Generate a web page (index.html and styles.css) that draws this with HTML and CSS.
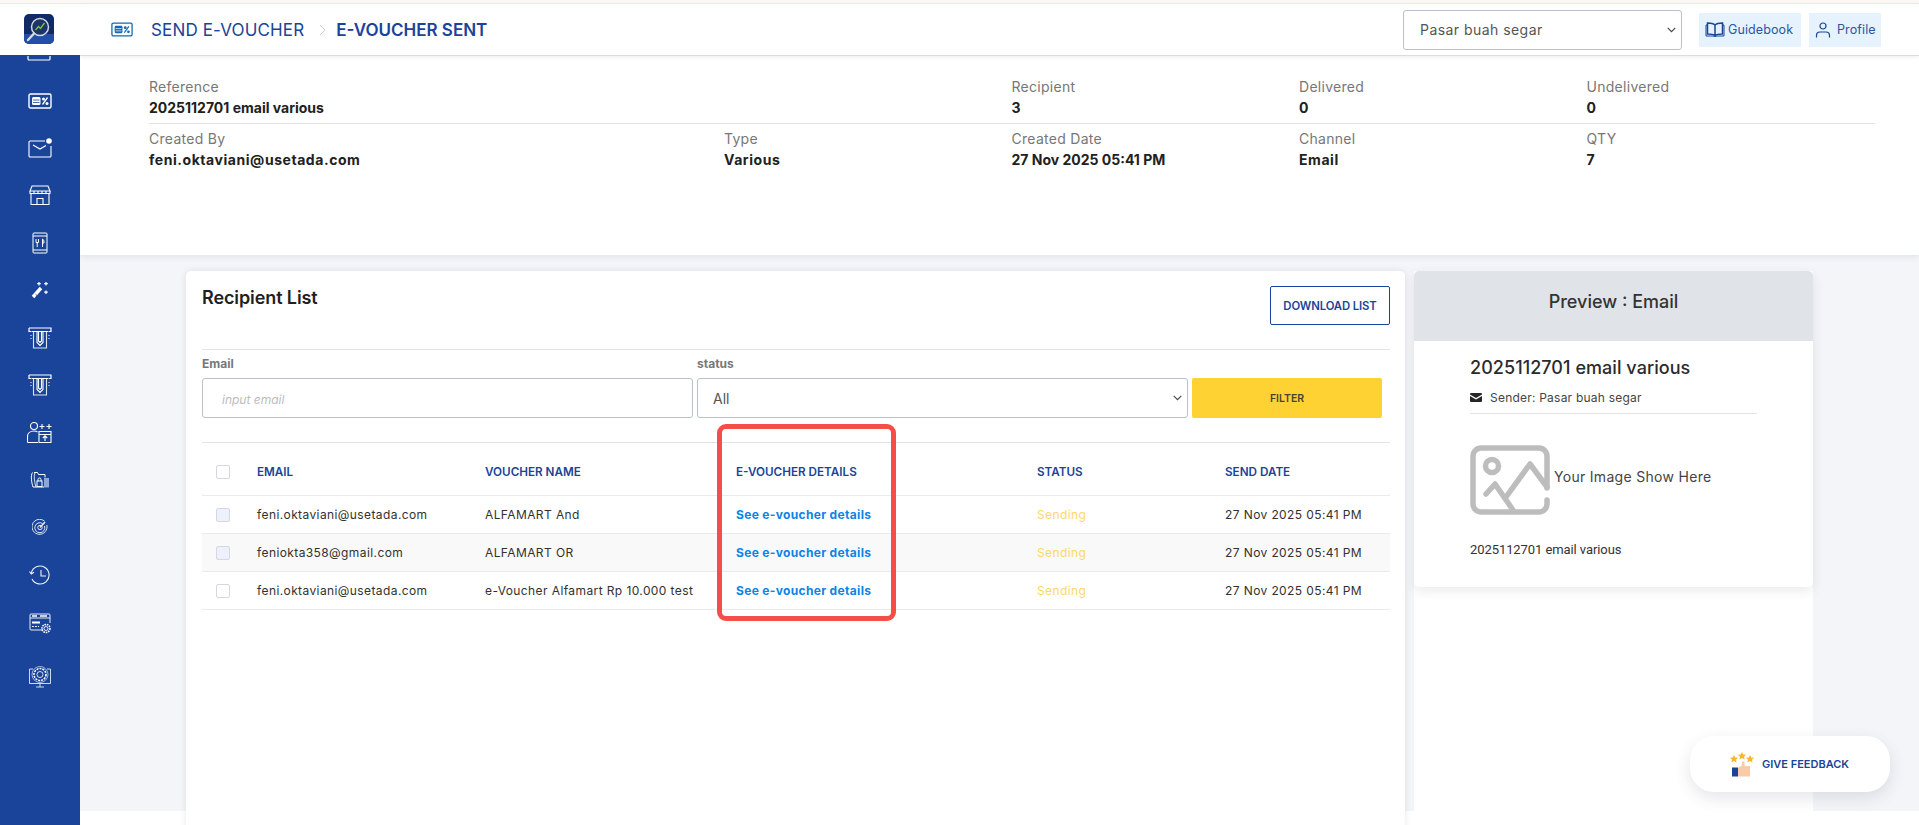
FILE: index.html
```html
<!DOCTYPE html>
<html lang="en">
<head>
<meta charset="utf-8">
<title>E-Voucher Sent</title>
<link rel="stylesheet" href="styles.css">
</head>
<body>
<svg class="defs" width="0" height="0" aria-hidden="true">
  <symbol id="voucher" viewBox="0 0 24 16">
    <rect x="1" y="1" width="22" height="14" rx="1.5" fill="none" stroke="currentColor" stroke-width="1.4"/>
    <rect x="4" y="4" width="8.500" height="8" rx="1.5" fill="currentColor"/>
    <path d="M5 7h6.500M5 9.500h6.500" stroke="var(--cut,#fff)" stroke-width=".8"/>
    <path d="M14.500 11.500l5-7" stroke="currentColor" stroke-width="1.300"/>
    <circle cx="15.500" cy="6" r="1.500" fill="currentColor"/><circle cx="19" cy="10.500" r="1.500" fill="currentColor"/>
  </symbol>
  <symbol id="atm" viewBox="0 0 24 22">
    <path d="M1 1h22v3.500h-2.500M1 1v3.500h2.500M4 4.500H20" fill="none" stroke="currentColor" stroke-width="1.2"/>
    <path d="M5.500 4.500V21h13V4.500" fill="none" stroke="currentColor" stroke-width="1.100" opacity=".85"/>
    <path d="M9 4.500v11l3 3 3-3v-11M10.500 4.500v9.500l1.500 1.500 1.500-1.500V4.500" fill="none" stroke="currentColor" stroke-width="1.100"/>
    <path d="M3 8v1M3 11v1M21 8v1M21 11v1" stroke="currentColor"/>
  </symbol>
  <symbol id="chev" viewBox="0 0 9 6">
    <path d="M.7.8l3.800 3.800L8.300.8" fill="none" stroke="#444" stroke-width="1.100"/>
  </symbol>
</svg>

<div class="topline"></div>
<div class="app">
  <aside class="sidebar">
    <div class="logo-box">
      <svg class="logo" width="30" height="30" viewBox="0 0 30 30">
        <rect width="30" height="30" rx="5" fill="#122a63"/>
        <path d="M0 20h30v5a5 5 0 0 1-5 5H5a5 5 0 0 1-5-5z" fill="#234ea8"/>
        <circle cx="16" cy="13" r="8.500" fill="#1c3466" stroke="#cfd6e4" stroke-width="1.500"/>
        <path d="M11.500 16l3-3.500 2 2 4-5.500" fill="none" stroke="#7fc241" stroke-width="1.300"/>
        <path d="M10 19.500L4 26" stroke="#d7dbe4" stroke-width="2.400" stroke-linecap="round"/>
      </svg>
    </div>
    <nav class="nav">
      <div class="nav-cut"><svg width="24" height="5" viewBox="0 0 24 5"><path d="M1 0v3a1 1 0 0 0 1 1h20a1 1 0 0 0 1-1V0" fill="none" stroke="#fff" stroke-width="1.200"/></svg></div>
      <div class="nav-item"><svg class="nav-voucher" width="24" height="16"><use href="#voucher"/></svg></div>
      <div class="nav-item">
        <svg width="24" height="20" viewBox="0 0 24 20" fill="none" stroke="#fff" stroke-width="1.100"><path d="M17 3H2a1 1 0 0 0-1 1v14a1 1 0 0 0 1 1h20a1 1 0 0 0 1-1V8"/><path d="M5 7l7 4 6-3.500"/><circle cx="21" cy="3" r="2.800" fill="#fff" stroke="none"/></svg>
      </div>
      <div class="nav-item">
        <svg width="22" height="20" viewBox="0 0 22 20" fill="none" stroke="#fff" stroke-width="1.100"><path d="M3 1h16l2 5H1z"/><path d="M1 6v2.500h20V6M5 6v2.500M9 6v2.500M13 6v2.500M17 6v2.500"/><path d="M2 8.500V19.500H20V8.500"/><path d="M8 19.500v-6h6v6"/></svg>
      </div>
      <div class="nav-item">
        <svg width="16" height="22" viewBox="0 0 16 22" fill="none" stroke="#fff" stroke-width="1"><rect x="1" y="1" width="14" height="20" rx="1"/><path d="M1 4h14M1 18h14"/><path d="M4 7v3.500h2.500V7M5.200 10.500V15M10.500 7v8M10.500 7c1.500.5 1.500 3 1.500 4h-1.500"/></svg>
      </div>
      <div class="nav-item">
        <svg width="18" height="18" viewBox="0 0 18 18" fill="none" stroke="#fff"><path d="M2 16l8-9" stroke-width="3.400"/><path d="M4.500 13.200l2.200 2" stroke="#1a4499" stroke-width=".8"/><path d="M8 1v3.500M6.200 2.700h3.600M15 1v3.500M13.200 2.700h3.600M15 9.500V13M13.200 11.200h3.600" stroke-width="1.200"/></svg>
      </div>
      <div class="nav-item"><svg width="24" height="22"><use href="#atm"/></svg></div>
      <div class="nav-item"><svg width="24" height="22"><use href="#atm"/></svg></div>
      <div class="nav-item">
        <svg width="26" height="22" viewBox="0 0 26 22" fill="none" stroke="#fff" stroke-width="1.100"><circle cx="7" cy="5" r="3.500"/><path d="M.5 21.500v-6c0-3 2.500-5.500 6.500-5.500 1.500 0 2.500.3 3.500 1M.5 21.500H11"/><path d="M12 10.500h12v11h-12zM12 13.500h12"/><path d="M18 20v-5M15.800 17l2.200-2.200 2.200 2.200"/><path d="M15 3v5M12.500 5.500h5M22 3v5M19.500 5.500h5"/></svg>
      </div>
      <div class="nav-item">
        <svg width="20" height="17" viewBox="0 0 20 17" fill="none" stroke="#fff"><path d="M4 1.500h3.500l1 2H15v3M2.500 1.500c-2 3-1 10 .5 14.500h11" stroke-width="1"/><path d="M5 1.500c-1.500 3-.5 9 .8 14.500" stroke-width=".8"/><rect x="7" y="10" width="5" height="5.500" stroke-width="1"/><path d="M8 10V8.500a1.500 1.500 0 0 1 3 0V10" stroke-width="1"/><path d="M14 7h5v9.500h-5z" fill="#8fa7d8" stroke="none"/></svg>
      </div>
      <div class="nav-item">
        <svg width="16" height="16" viewBox="0 0 16 16" fill="none" stroke="#dfe7f6" stroke-width="1"><path d="M12.500 2.200A7.500 7.500 0 1 0 14.800 6"/><path d="M10.500 4.500A5 5 0 1 0 12.500 7"/><circle cx="8" cy="8.500" r="2.200"/><path d="M8 8.500l5-5.500" stroke-width="1.600"/></svg>
      </div>
      <div class="nav-item">
        <svg width="22" height="20" viewBox="0 0 22 20" fill="none" stroke="#eef2fa" stroke-width="1.100"><path d="M2.300 8A9 9 0 1 1 3 14"/><path d="M.5 6.500l1.800 2.500 2.700-1.800"/><path d="M12 5v6h5"/></svg>
      </div>
      <div class="nav-item nav-gear">
        <svg width="22" height="22" viewBox="0 0 22 22" fill="none" stroke="#fff" stroke-width=".9"><path d="M14 17H2a1 1 0 0 1-1-1V2a1 1 0 0 1 1-1h18a1 1 0 0 1 1 1v8"/><path d="M1 5h20"/><path d="M3 3h5M11 3h7" stroke-width="1.600"/><path d="M3 9.500h8" stroke-width="2"/><path d="M3 13.500h7" stroke-dasharray="2 1"/><circle cx="17" cy="15.500" r="2"/><circle cx="17" cy="15.500" r="4" stroke-width="1.500" stroke-dasharray="1.600 .8"/></svg>
      </div>
      <div class="nav-item nav-last">
        <svg width="24" height="24" viewBox="0 0 24 24" fill="none" stroke="#fff" stroke-width=".8"><path d="M5 4H1.500v14.500h21V4H19"/><path d="M8 22h8M12 18.500V22"/><circle cx="12" cy="9.500" r="3"/><circle cx="12" cy="9.500" r="6" stroke-width="1.600" stroke-dasharray="2 1"/><circle cx="12" cy="9.500" r="8" stroke-width=".6"/></svg>
      </div>
    </nav>
  </aside>

  <main class="main">
    <header class="header">
      <div class="crumbs">
        <svg class="crumb-icon" width="22" height="15"><use href="#voucher"/></svg>
        <span class="crumb">SEND E-VOUCHER</span>
        <svg class="crumb-sep" width="7" height="12" viewBox="0 0 7 12"><path d="M1 1l5 5-5 5" fill="none" stroke="#c9ccd2" stroke-width="1"/></svg>
        <span class="crumb crumb-current">E-VOUCHER SENT</span>
      </div>
      <div class="header-actions">
        <div class="select-wrap merchant-wrap">
          <select class="merchant"><option>Pasar buah segar</option></select>
          <svg class="chev" width="9" height="6"><use href="#chev"/></svg>
        </div>
        <a class="help-btn guide">
          <svg width="20" height="15" viewBox="0 0 20 15" fill="none" stroke="#1a4499" stroke-width="1.500"><path d="M10 3C8 1 5 1 2.500 1v11c2.500 0 5.500 0 7.500 1.500C12 12 15 12 17.500 12V1C15 1 12 1 10 3zM10 3v10.500"/><path d="M2.500 3H1v11h7l2 .5 2-.5h7V3h-1.500" stroke-width="1"/></svg>
          Guidebook
        </a>
        <a class="help-btn profile">
          <svg width="16" height="16" viewBox="0 0 16 16" fill="none" stroke="#1a4499" stroke-width="1.200"><circle cx="8" cy="4" r="3"/><path d="M1.500 15.500v-2c0-2 1.500-3.500 3.500-3.500h6c2 0 3.500 1.500 3.500 3.500v2"/></svg>
          Profile
        </a>
      </div>
    </header>

    <section class="summary">
      <div class="summary-row with-rule">
        <div class="field wide"><div class="field-label">Reference</div><div class="field-value tight">2025112701 email various</div></div>
        <div class="field"><div class="field-label">Recipient</div><div class="field-value">3</div></div>
        <div class="field"><div class="field-label">Delivered</div><div class="field-value">0</div></div>
        <div class="field"><div class="field-label">Undelivered</div><div class="field-value">0</div></div>
      </div>
      <div class="summary-row second">
        <div class="field"><div class="field-label">Created By</div><div class="field-value">feni.oktaviani@usetada.com</div></div>
        <div class="field"><div class="field-label">Type</div><div class="field-value">Various</div></div>
        <div class="field"><div class="field-label">Created Date</div><div class="field-value tight">27 Nov 2025 05:41 PM</div></div>
        <div class="field"><div class="field-label">Channel</div><div class="field-value">Email</div></div>
        <div class="field"><div class="field-label">QTY</div><div class="field-value">7</div></div>
      </div>
    </section>

    <section class="content">
      <div class="card list-card">
        <div class="card-head">
          <h2 class="card-title">Recipient List</h2>
          <button class="download">DOWNLOAD LIST</button>
        </div>
        <div class="filters">
          <label class="filter filter-email"><span class="filter-label">Email</span><input class="control" placeholder="input email"></label>
          <label class="filter filter-status"><span class="filter-label">status</span>
            <span class="select-wrap"><select class="control"><option>All</option></select><svg class="chev" width="9" height="6"><use href="#chev"/></svg></span>
          </label>
          <button class="filter-btn">FILTER</button>
        </div>
        <table class="table">
          <colgroup><col class="c1"><col class="c2"><col class="c3"><col class="c4"><col class="c5"><col class="c6"></colgroup>
          <thead>
            <tr><th><span class="check"></span></th><th>EMAIL</th><th>VOUCHER NAME</th><th>E-VOUCHER DETAILS</th><th>STATUS</th><th>SEND DATE</th></tr>
          </thead>
          <tbody>
            <tr><td><span class="check tinted"></span></td><td>feni.oktaviani@usetada.com</td><td>ALFAMART And</td><td><a class="see">See e-voucher details</a></td><td class="sending">Sending</td><td>27 Nov 2025 05:41 PM</td></tr>
            <tr class="alt"><td><span class="check tinted"></span></td><td>feniokta358@gmail.com</td><td>ALFAMART OR</td><td><a class="see">See e-voucher details</a></td><td class="sending">Sending</td><td>27 Nov 2025 05:41 PM</td></tr>
            <tr><td><span class="check"></span></td><td>feni.oktaviani@usetada.com</td><td>e-Voucher Alfamart Rp 10.000 test</td><td><a class="see">See e-voucher details</a></td><td class="sending">Sending</td><td>27 Nov 2025 05:41 PM</td></tr>
          </tbody>
        </table>
      </div>
      <div class="preview-col">
        <div class="card preview">
          <div class="preview-head">Preview : Email</div>
          <div class="preview-body">
            <h3 class="preview-title">2025112701 email various</h3>
            <div class="sender">
              <svg width="12" height="9" viewBox="0 0 12 9"><path d="M1 0h10a1 1 0 0 1 1 1v.6L6 5 0 1.600V1a1 1 0 0 1 1-1zM0 3l6 3.400L12 3v5a1 1 0 0 1-1 1H1a1 1 0 0 1-1-1z" fill="#262626"/></svg>
              Sender: Pasar buah segar
            </div>
            <div class="image-row">
              <svg width="80" height="70" viewBox="0 0 80 70" fill="none" stroke="#bdbdbd" stroke-width="5.500" stroke-linecap="round" stroke-linejoin="round"><path d="M77 43V11a8 8 0 0 0-8-8H11a8 8 0 0 0-8 8v48a8 8 0 0 0 8 8h58a8 8 0 0 0 8-8v-4"/><circle cx="22" cy="21" r="6.500"/><path d="M16 49l9-10 18 26"/><path d="M36 52l24-33 17 23"/></svg>
              <span class="image-note">Your Image Show Here</span>
            </div>
            <p class="preview-text">2025112701 email various</p>
          </div>
        </div>
      </div>
    </section>
  </main>
</div>

<div class="highlight"></div>
<a class="feedback">
  <svg width="24" height="25" viewBox="0 0 24 25">
    <path d="M4 3l1.200 2.500 2.800.3-2 1.900.6 2.800L4 9l-2.600 1.500.6-2.800-2-1.900 2.800-.3zM12 0l1.200 2.500 2.800.3-2 1.900.6 2.800L12 6 9.400 7.500l.6-2.800-2-1.900 2.800-.3zM20 3l1.200 2.500 2.800.3-2 1.900.6 2.800L20 9l-2.600 1.500.6-2.800-2-1.900 2.800-.3z" fill="#fbb62c"/>
    <rect x="2" y="15.500" width="6" height="9" fill="#1a4499"/>
    <path d="M8 16l4-2.500V9.500h2.500V14H20v10.500H8z" fill="#f7cba8"/>
  </svg>
  GIVE FEEDBACK
</a>
</body>
</html>
```

FILE: styles.css
```css
* { box-sizing: border-box; }
html, body { margin: 0; height: 825px; overflow: hidden; background: #fff; }
body { font-family: Inter, "Open Sans", sans-serif; color: #212529; position: relative; }
.defs { position: absolute; }

.topline { height: 4px; background: #fff7f5; border-bottom: 1px solid #fbe4df; }
.app { display: flex; height: 821px; }

.sidebar { width: 80px; flex: none; background: #1a4499; position: relative; z-index: 3; }
.logo-box { height: 51px; background: #fff; padding: 10px 0 0 24px; position: relative; z-index: 2; }
.logo { display: block; }
.nav { color: #fff; --cut: #1a4499; }
.nav-cut { height: 22px; padding-left: 27px; line-height: 0; }
.nav-item { height: 47.4px; display: flex; align-items: center; justify-content: center; }
.nav-gear { margin-top: 2px; }
.nav-last { margin-top: 6px; }

.main { flex: 1; min-width: 0; display: flex; flex-direction: column; }

.header { height: 52px; flex: none; background: #fff; border-bottom: 1px solid #dcdcdc; box-shadow: 0 1px 4px rgba(0,0,0,.07); display: flex; align-items: center; justify-content: space-between; padding: 0 38px 0 31px; position: relative; z-index: 2; }
.crumbs { display: flex; align-items: center; color: #1a4499; --cut: #fff; }
.crumb-icon { color: #1268b3; margin-right: 18px; }
.crumb { font-size: 17px; letter-spacing: .15px; }
.crumb-sep { margin: 0 10px 0 15px; }
.crumb-current { font-weight: 600; letter-spacing: 0; }
.header-actions { display: flex; align-items: center; gap: 8px; }

.select-wrap { position: relative; display: block; }
.merchant-wrap { margin-right: 9px; }
.chev { position: absolute; right: 6px; top: 17px; pointer-events: none; }
select { appearance: none; -webkit-appearance: none; }
.merchant { display: block; width: 279px; height: 40px; border: 1px solid #b9c2cc; border-radius: 3px; background: #fff; font: 14px Inter, sans-serif; letter-spacing: .45px; color: #555; padding: 0 16px; }
.help-btn { height: 34px; background: #e6f3fe; color: #2c54a6; font-size: 12.5px; letter-spacing: .1px; display: flex; align-items: center; }
.guide { width: 102px; gap: 3px; padding-left: 6px; }
.profile { width: 72px; gap: 6px; padding-left: 6px; }

.summary { height: 199px; flex: none; background: #fff; padding: 20px 44px 0 69px; position: relative; z-index: 1; box-shadow: 0 2px 6px rgba(60,100,120,.1); }
.summary-row { display: grid; grid-template-columns: 575px repeat(3, 287.5px) 1fr; }
.with-rule { height: 48px; border-bottom: 1px solid #e3e3e3; }
.second { padding-top: 4px; }
.wide { grid-column: span 2; }
.field-label { font-size: 14px; line-height: 21px; letter-spacing: .28px; color: #777; }
.field-value { font-size: 14px; line-height: 21px; font-weight: 700; letter-spacing: .55px; color: #212121; }
.tight { letter-spacing: 0; }

.content { height: 556px; flex: none; background: #f3f5f8; padding: 16px 0 0 106px; display: flex; gap: 9px; align-items: flex-start; }
.card { background: #fff; border-radius: 5px 5px 0 0; }
.list-card { width: 1219px; height: 600px; padding: 15px 15px 0 16px; flex: none; box-shadow: 0 0 6px rgba(60,70,90,.12); }
.card-head { display: flex; justify-content: space-between; align-items: flex-start; height: 64px; border-bottom: 1px solid #e3e3e3; }
.card-title { margin: 0; font-size: 18px; line-height: 24px; font-weight: 600; color: #1f1f1f; letter-spacing: -.1px; }
.download { width: 120px; height: 39px; background: #fff; border: 1px solid #1a4499; border-radius: 2px; color: #1a4499; font: 600 11.3px Inter, sans-serif; letter-spacing: -.1px; padding: 0; }

.filters { display: flex; align-items: flex-end; height: 93px; padding-bottom: 24px; border-bottom: 1px solid #e3e3e3; }
.filter { display: flex; flex-direction: column; }
.filter-email { width: 491px; margin-right: 4px; }
.filter-status { width: 491px; margin-right: 4px; }
.filter-label { font-size: 12px; line-height: 14px; font-weight: 700; color: #777; margin-bottom: 7px; }
.control { display: block; width: 100%; height: 40px; border: 1px solid #b9c2cc; border-radius: 3px; background: #fff; font: 14px Inter, sans-serif; color: #555; padding: 0 15px; }
.control::placeholder { font-style: italic; font-size: 12px; color: #bcbcbc; }
input.control { padding-left: 19px; }
.filter-btn { width: 190px; height: 40px; background: #ffd233; border: 0; border-radius: 2px; font: 600 10.5px Inter, sans-serif; color: #4a4230; margin-right: 8px; }

.table { width: 1188px; table-layout: fixed; border-collapse: collapse; font-size: 12px; letter-spacing: .4px; color: #33312e; }
.c1 { width: 55px; } .c2 { width: 228px; } .c3 { width: 251px; } .c4 { width: 301px; } .c5 { width: 188px; } .c6 { width: 165px; }
.table th { height: 52px; padding: 7px 0 0; text-align: left; font-weight: 600; font-size: 11.7px; letter-spacing: 0; color: #1a4499; border-bottom: 1px solid #e9ecef; }
.table td { height: 38px; padding: 1px 0 0; border-bottom: 1px solid #e9ecef; }
.table th:first-child, .table td:first-child { padding-left: 14px; }
.alt td { background: #f9f9f9; }
.check { display: block; width: 14px; height: 14px; border: 1px solid #d5d8de; border-radius: 2px; background: #fff; }
.tinted { background: #edf1fb; }
.see { color: #0a84e8; font-weight: 700; font-size: 12px; letter-spacing: .33px; }
.sending { color: #ffd766; }

.preview-col { width: 399px; height: 600px; background: #fff; flex: none; }
.preview { border-radius: 5px; box-shadow: 0 4px 12px rgba(50,60,80,.1); height: 316px; }
.preview-head { height: 70px; padding-bottom: 10px; background: #e0e4e8; border-radius: 5px 5px 0 0; display: flex; align-items: center; justify-content: center; font-size: 18px; font-weight: 500; color: #333; }
.preview-body { padding: 15px 56px 0; }
.preview-title { margin: 0; font-size: 18px; line-height: 24px; font-weight: 500; color: #2b2b2b; letter-spacing: .05px; }
.sender { display: flex; align-items: center; gap: 8px; font-size: 12px; line-height: 18px; letter-spacing: .22px; color: #444; margin-top: 7px; padding-bottom: 5px; border-bottom: 1px solid #e5e5e5; height: 27px; }
.image-row { display: flex; align-items: center; gap: 4px; margin-top: 31px; font-size: 14px; letter-spacing: .3px; color: #444; }
.image-note { padding-bottom: 8px; }
.preview-text { margin: 27px 0 0; font: 13px/16px Roboto, sans-serif; letter-spacing: -.08px; color: #333; }

.highlight { position: absolute; left: 717px; top: 424px; width: 179px; height: 197px; border: 5px solid #f54d48; border-radius: 9px; pointer-events: none; z-index: 5; }
.feedback { position: absolute; left: 1690px; top: 736px; width: 200px; height: 56px; border-radius: 24px; background: #fff; box-shadow: 0 6px 16px rgba(40,50,70,.12); display: flex; align-items: center; gap: 8px; padding-left: 40px; font-size: 11px; font-weight: 600; color: #1a4499; z-index: 6; }
```
